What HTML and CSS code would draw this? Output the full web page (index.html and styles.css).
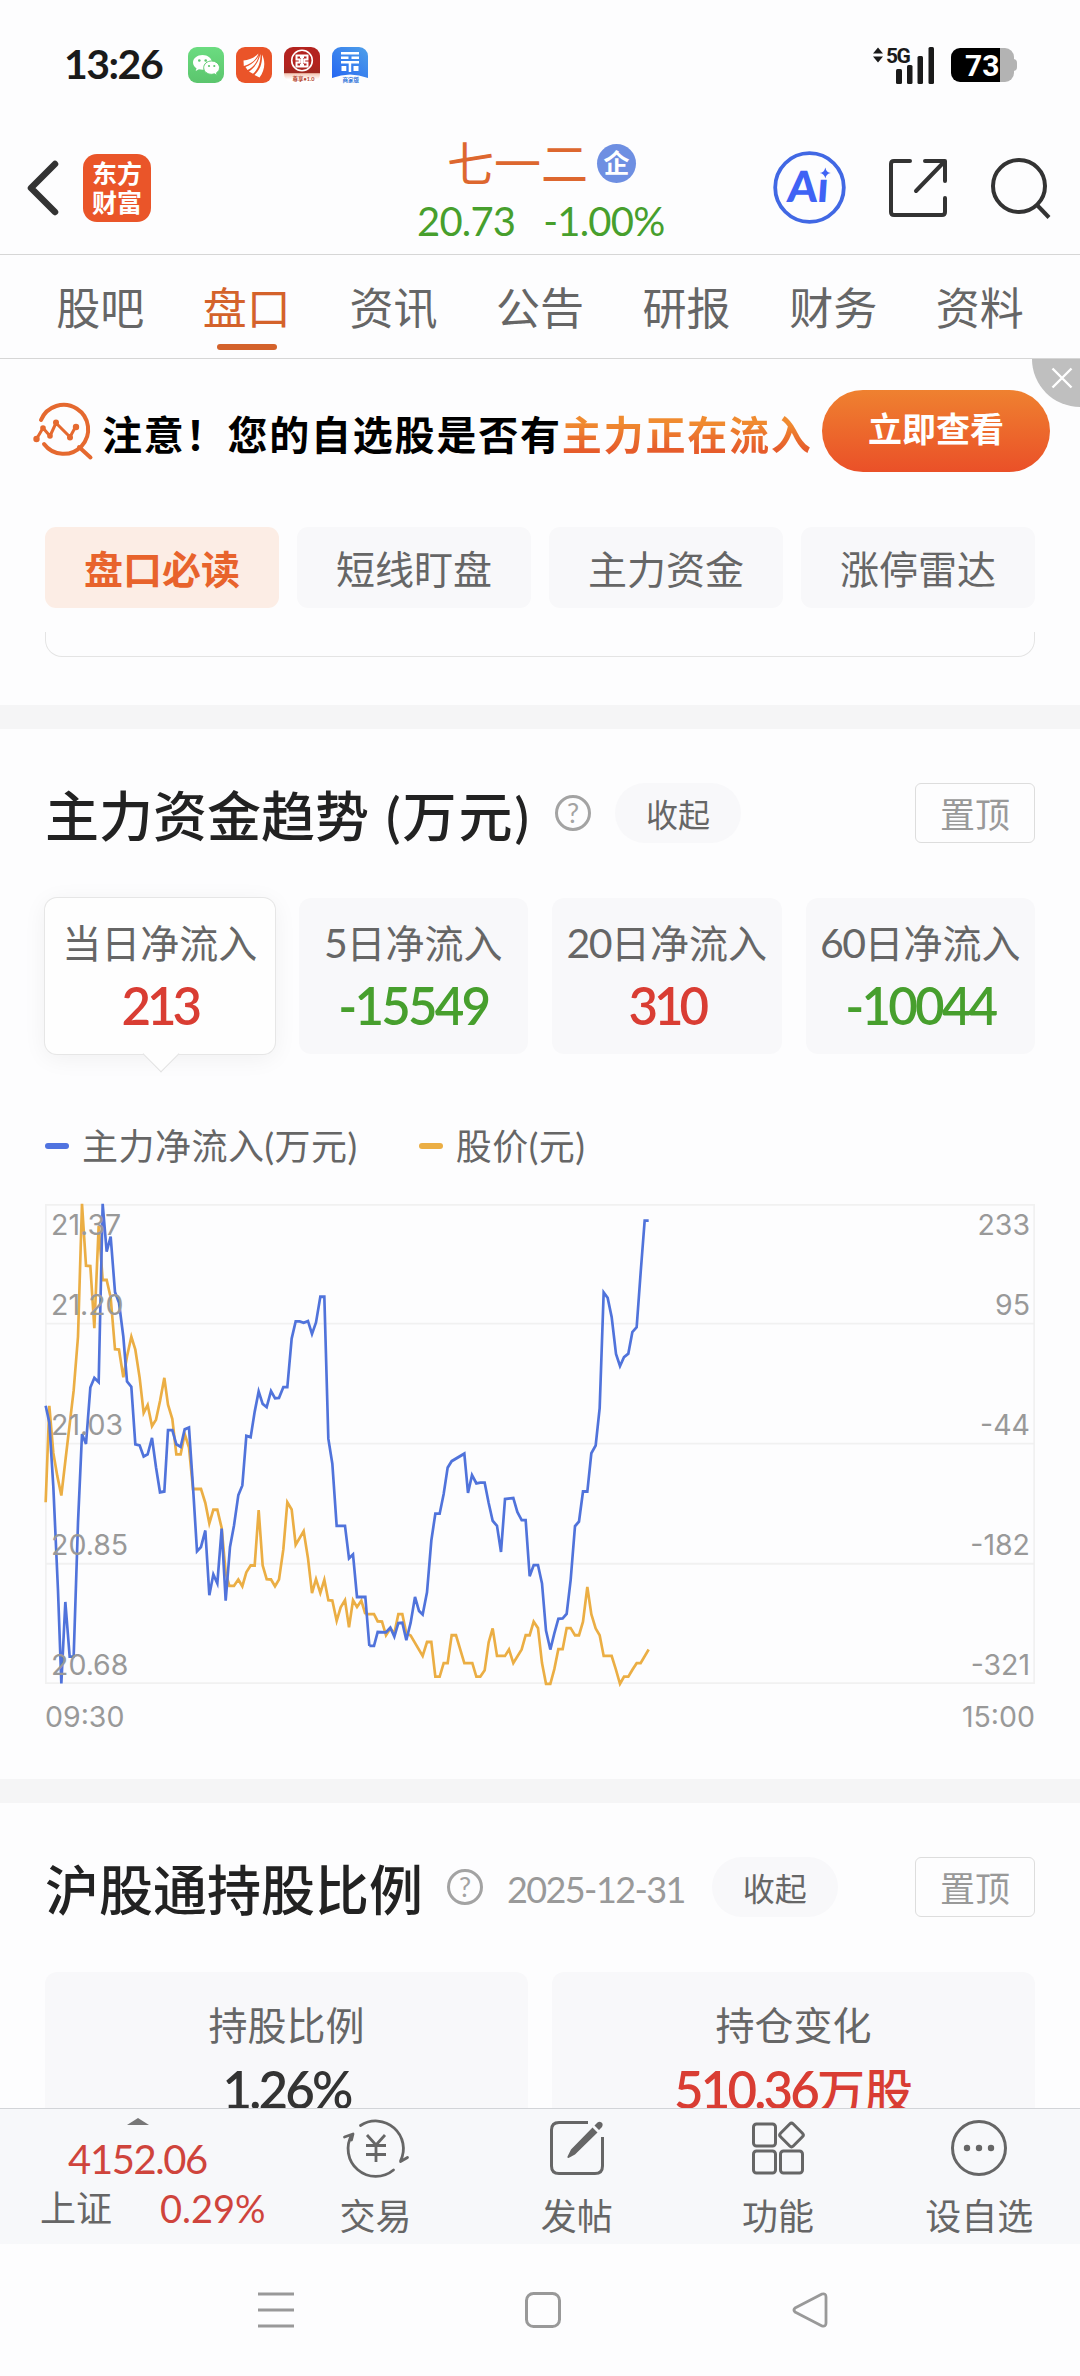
FILE: index.html
```html
<!DOCTYPE html>
<html lang="zh-CN">
<head>
<meta charset="utf-8">
<title>七一二 - 盘口</title>
<link rel="stylesheet" href="styles.css">
</head>
<body>
<div class="screen">
  <div class="status">
    <span class="clock">13:26</span>
    <div class="apps">
      <svg class="app" viewBox="0 0 36 36"><defs><linearGradient id="wx" x2="0" y2="1"><stop stop-color="#6bdc80"/><stop offset="1" stop-color="#5bc56d"/></linearGradient></defs><rect width="36" height="36" rx="9" fill="url(#wx)"/><path fill="#fff" d="M14.500 8c-5.200 0-9.500 3.300-9.500 7.500 0 2.400 1.400 4.500 3.500 5.800l-.8 2.700 3.200-1.700c1.200.3 2.400.4 3.600.4 5.200 0 9.500-3.200 9.500-7.200S19.700 8 14.500 8z"/><path fill="#fff" stroke="#61ce74" stroke-width="1" d="M23.500 14c-4.400 0-7.800 3-7.800 6.700s3.400 6.600 7.800 6.600c1 0 2-.2 2.900-.5l2.700 1.500-.6-2.500c1.900-1.200 3-3 3-5.100 0-3.700-3.600-6.700-8-6.700z"/><g fill="#5cc76e"><circle cx="11.300" cy="13.500" r="1.300"/><circle cx="17.700" cy="13.500" r="1.300"/><circle cx="21" cy="19" r="1.100"/><circle cx="26.300" cy="19" r="1.100"/></g></svg>
      <svg class="app" viewBox="0 0 36 36"><rect width="36" height="36" rx="9" fill="#ea5429"/><path fill="#fff" d="M7.500 13.500 7.800 19C15 17.500 20.500 12.500 22.500 6.500 18 11 13 13 7.500 13.500zM13 24.500l4 2.300c5.500-5 7.700-12.300 7.500-19.800-2 7.500-5.500 13.500-11.500 17.500zM18.500 28l5 2.500c5-6.500 6.500-15 2.500-23 .5 8-1.500 15-7.500 20.500zM9.500 20c6-2 11-6.500 13.500-12-1.500 7-6 12.500-11.500 15z"/></svg>
      <svg class="app" viewBox="0 0 36 36"><defs><linearGradient id="icbc" x2="0" y2="1"><stop offset=".5" stop-color="#b3231f"/><stop offset=".72" stop-color="#9e2a21"/><stop offset=".74" stop-color="#f5c8b5"/><stop offset=".9" stop-color="#fff"/></linearGradient></defs><rect width="36" height="36" rx="9" fill="url(#icbc)"/><circle cx="18" cy="13.500" r="10.300" fill="none" stroke="#fff" stroke-width="1.600"/><path fill="none" stroke="#fff" stroke-width="2" d="M12.500 8.500h11v4h-3.300v3h3.300v4h-11v-4h3.300v-3h-3.300zM16 10h4M16 18h4M18 10v8"/><text x="8.500" y="34" class="app-tag" fill="#b5442c">尊享•1.0</text></svg>
      <svg class="app" viewBox="0 0 36 36"><defs><linearGradient id="cz" x1="0" y1="1" x2="1" y2="0"><stop stop-color="#2566f2"/><stop offset="1" stop-color="#4fa0e9"/></linearGradient></defs><path d="M9 0h18a9 9 0 0 1 9 9v22q-18-7-36 0V9a9 9 0 0 1 9-9z" fill="url(#cz)"/><path fill="#fff" d="M9 5h18v2.500H9zM9 9.500h7.500V12H9zM19.500 9.500H27V12h-7.500zM9 14h18v2.500h-7.800V25h-2.500v-8.500H9zM9.500 19h4.800v5H9.500zM21.500 19h5v5h-5z"/><text x="10.500" y="34.500" class="app-tag" fill="#3576d9">商家版</text></svg>
    </div>
    <svg class="signal" viewBox="0 0 64 38" width="64" height="38"><path fill="#1a1a1a" d="M0 7.500 5 1.500l5 6zM0 10.500h10l-5 6z"/><text x="13" y="17" class="net">5G</text><g fill="#1a1a1a"><rect x="23" y="23" width="6" height="15" rx="1.500"/><rect x="34" y="19" width="5.500" height="19" rx="1.500"/><rect x="44.500" y="10" width="5.500" height="28" rx="1.500"/><rect x="55.500" y="1" width="5.500" height="37" rx="1.500"/></g></svg>
    <div class="battery"><span class="level">73</span></div>
  </div>

  <header class="header">
    <svg class="back" width="32" height="56" viewBox="0 0 32 56"><path d="M28 4 4 28l24 24" fill="none" stroke="#333" stroke-width="6.500" stroke-linecap="round" stroke-linejoin="round"/></svg>
    <div class="logo"><span>东方</span><span>财富</span></div>
    <div class="stock">
      <div class="name">七一二<span class="ent">企</span></div>
      <div class="quote"><span>20.73</span><span>-1.00%</span></div>
    </div>
    <div class="tools">
      <svg width="73" height="73" viewBox="0 0 73 73"><circle cx="36.500" cy="36.500" r="34.300" fill="none" stroke="#4168e4" stroke-width="3.800"/><path d="M52.300 16.500q1 5 5.500 5.500-4.500.7-5.500 5.500-1-4.800-5.500-5.500 4.500-.5 5.500-5.500z" fill="#3f63f5"/><text x="17" y="51" class="ai" transform="skewX(-4)">Aı</text></svg>
      <svg width="60" height="60" viewBox="0 0 60 60" fill="none" stroke="#333" stroke-width="4" stroke-linecap="round" stroke-linejoin="round"><path d="M22 3H6Q3 3 3 6v48q0 3 3 3h48q3 0 3-3V40M37 3h20v20M56 4 28 33"/></svg>
      <svg width="60" height="60" viewBox="0 0 60 60" fill="none" stroke="#333" stroke-width="4"><circle cx="28" cy="28" r="26"/><path d="m46 47 12 12.500"/></svg>
    </div>
  </header>

  <nav class="tabs">
    <span>股吧</span><span class="on">盘口</span><span>资讯</span><span>公告</span><span>研报</span><span>财务</span><span>资料</span>
  </nav>

  <main class="content">
    <div class="banner">
      <svg width="60" height="58" viewBox="0 0 60 58" fill="none" stroke="#e5692f" stroke-width="4" stroke-linecap="round" stroke-linejoin="round"><path d="M8 18A24.500 24.500 0 1 1 11 42M46 45l11.500 10.500"/><path stroke-width="3" d="m3.500 37 6.500-11 7 8 6-13L37 35l6-11"/><g fill="#e5692f" stroke="none"><circle cx="3.500" cy="37" r="3.200"/><circle cx="10" cy="26" r="2.800"/><circle cx="17" cy="34" r="2.800"/><circle cx="23" cy="20.500" r="3"/><circle cx="37" cy="35.500" r="3"/><circle cx="43" cy="25" r="3.200"/></g></svg>
      <p class="pitch">注意！您的自选股是否有<em>主力正在流入</em></p>
      <span class="cta">立即查看</span>
      <span class="close"><svg width="22" height="22" viewBox="0 0 22 22"><path d="m1.500 1.500 19 19m0-19-19 19" stroke="#fff" stroke-width="2.400"/></svg></span>
    </div>

    <div class="chips">
      <span class="on">盘口必读</span><span>短线盯盘</span><span>主力资金</span><span>涨停雷达</span>
    </div>
    <div class="card-tail"></div>

    <section class="trend">
      <div class="head">
        <h2>主力资金趋势<span class="unit">(万元)</span></h2>
        <span class="help">?</span>
        <span class="fold">收起</span>
        <span class="pin">置顶</span>
      </div>
      <div class="periods">
        <div class="period on"><span class="label">当日净流入</span><b class="up">213</b></div>
        <div class="period"><span class="label"><i>5</i>日净流入</span><b class="down">-15549</b></div>
        <div class="period"><span class="label"><i>20</i>日净流入</span><b class="up">310</b></div>
        <div class="period"><span class="label"><i>60</i>日净流入</span><b class="down">-10044</b></div>
      </div>
      <div class="legend"><span class="flow">主力净流入(万元)</span><span class="price">股价(元)</span></div>
      <div class="chart">
        <svg class="plot" viewBox="45 68.500 2970 1343" preserveAspectRatio="none">
          <g stroke="#f1f1f1" stroke-width="5" fill="none"><path d="M45 403H3015M45 739H3015M45 1075H3015"/><rect x="47.500" y="71" width="2965" height="1338"/></g>
          <g fill="none" stroke-width="8" stroke-linejoin="miter">
            <g stroke="#ebae44">
              <polyline points="47,903 58,633 70,765 82,830 94,884 107,780 119,685 131,590 144,440 156,68 168,241 181,242 193,416 206,130 218,281 230,281 242,330 255,475 267,476 280,553 291,495 304,440 316,476 329,555 341,653 353,631 366,690 378,672 390,620 403,555 414,630 427,670 439,769 452,769 464,712 477,750 489,866 513,866 526,905 538,962 550,924 562,924 575,975 587,1100 598,1137 612,1137 625,1119 637,1138 649,1099 662,1080 674,1080 686,925 698,1080 710,1118 723,1119 735,1138 747,1119 760,1035 772,903 785,923 797,1022 809,1003 821,984 834,1060 846,1157 858,1118 871,1157 883,1120 895,1177 907,1178 920,1235 932,1197 945,1177 957,1253 969,1177 981,1196 994,1178 1006,1216"/>
              <polyline transform="translate(960)" points="46,1216 72,1216 83,1236 96,1237 108,1275 121,1256 133,1270 145,1216 157,1216 169,1270 182,1276 218,1333 231,1294 244,1294 256,1391 269,1391 281,1353 293,1353 305,1275 318,1275 343,1353 367,1353 379,1391 391,1391 404,1373 416,1295 428,1256 441,1333 465,1333 477,1315 490,1353 515,1315 527,1275 539,1275 551,1237 564,1255 576,1353 588,1411 601,1411 613,1370 625,1314 638,1314 650,1255 662,1255 675,1275 687,1275 699,1237 712,1140 724,1216 737,1256 749,1275 761,1333 785,1333 798,1372 810,1411 822,1391 835,1391 847,1372 860,1353 872,1353 896,1315"/>
            </g>
            <g stroke="#5073db">
              <polyline points="47,633 58,680 70,860 84,1150 94,1410 106,1182 119,1335 131,1335 144,960 156,712 168,740 181,582 193,555 206,567 218,68 230,202 242,160 255,315 267,345 280,440 291,565 304,580 316,741 329,744 341,775 353,769 366,723 378,805 390,875 403,873 414,701 427,701 439,741 452,748 464,699 477,694 489,860 501,1040 513,1028 526,982 538,1163 550,1105 562,1130 575,977 587,1178 600,1028 612,968 625,883 637,856 649,717 662,721 674,650 686,593 698,628 710,637 723,592 735,612 747,611 760,581 772,581 785,445 797,397 809,397 821,401 834,396 846,432 858,400 871,328 883,328 895,725 907,795 920,969 945,969 957,1060 969,1049 981,1168 1006,1168 1018,1305"/>
              <polyline transform="translate(960)" points="58,1305 72,1305 83,1266 108,1267 121,1254 133,1279 145,1241 157,1240 169,1289 182,1240 195,1168 207,1207 218,1217 231,1155 244,1010 256,935 269,935 281,880 293,806 305,788 343,767 354,877 366,827 379,850 391,848 404,848 416,905 428,955 441,969 453,1042 465,894 490,891 502,930 515,953 527,953 539,1110 551,1079 564,1079 576,1130 588,1262 601,1315 613,1270 625,1229 638,1228 650,1215 662,1120 675,970 687,957 699,873 712,873 724,766 737,744 749,640 761,316 773,331 785,385 798,488 810,522 822,497 835,487 847,427 860,413 872,260 884,115 896,115"/>
            </g>
          </g>
        </svg>
        <div class="scale"><span>21.37</span><span>21.20</span><span>21.03</span><span>20.85</span><span>20.68</span></div>
        <div class="scale right"><span>233</span><span>95</span><span>-44</span><span>-182</span><span>-321</span></div>
      </div>
      <div class="times"><span>09:30</span><span>15:00</span></div>
    </section>

    <section class="holding">
      <div class="head">
        <h2>沪股通持股比例</h2>
        <span class="help">?</span>
        <span class="date">2025-12-31</span>
        <span class="fold">收起</span>
        <span class="pin">置顶</span>
      </div>
      <div class="stats">
        <div class="stat"><span class="label">持股比例</span><b>1.26%</b></div>
        <div class="stat"><span class="label">持仓变化</span><b class="change">510.36<i>万股</i></b></div>
      </div>
    </section>
  </main>

  <footer class="bar">
    <div class="index">
      <i class="caret"></i>
      <span class="points">4152.06</span>
      <div class="row"><span>上证</span><span class="pct">0.29%</span></div>
    </div>
    <div class="action"><svg width="66" height="58" viewBox="0 0 66 58" fill="none" stroke="#666" stroke-width="2.800" stroke-linecap="round" stroke-linejoin="round"><path d="M17.500 6.500A27.700 27.700 0 0 1 57.500 42M50.500 51A27.700 27.700 0 0 1 9 15.500M1.500 18l8.500-3-1.500 6M57.500 42.500l7-4"/><path d="m24 16 9 10 9-10M23 26.500h20M23 35.500h20M33 26v17" stroke-linecap="butt"/></svg><span>交易</span></div>
    <div class="action"><svg width="58" height="58" viewBox="0 0 58 58" fill="none" stroke="#666" stroke-width="3"><path d="M40 3.500H11Q3.500 3.500 3.500 11v36q0 7.500 7.500 7.500h36q7.500 0 7.500-7.500V18"/><path fill="#666" stroke="none" d="m44.500 8.500 5 5L27 35.500l-6.500 3.500q-1.500 0-1-1.500l3.500-7zM46.500 6.500l3-3q2-1.500 4 0t.5 4.500l-3 3z"/></svg><span>发帖</span></div>
    <div class="action"><svg width="54" height="54" viewBox="0 0 54 54" fill="none" stroke="#666" stroke-width="3"><rect x="2.500" y="3" width="22" height="22" rx="3"/><rect x="2.500" y="30" width="22" height="22" rx="3"/><rect x="29.500" y="30" width="22" height="22" rx="3"/><rect x="31.500" y="5" width="18" height="18" rx="2.500" transform="rotate(45 40.500 14)"/></svg><span>功能</span></div>
    <div class="action"><svg width="58" height="58" viewBox="0 0 58 58"><circle cx="29" cy="29" r="26.500" fill="none" stroke="#666" stroke-width="3"/><g fill="#666"><circle cx="17" cy="29" r="3.200"/><circle cx="29" cy="29" r="3.200"/><circle cx="41" cy="29" r="3.200"/></g></svg><span>设自选</span></div>
  </footer>

  <div class="sysnav">
    <svg width="36" height="36" viewBox="0 0 36 36" stroke="#999" stroke-width="3"><path d="M0 2h36M0 18h36M0 34h36"/></svg>
    <svg width="36" height="36" viewBox="0 0 36 36" fill="none" stroke="#999" stroke-width="3"><rect x="1.500" y="1.500" width="33" height="33" rx="7"/></svg>
    <svg width="36" height="36" viewBox="0 0 36 36" fill="none" stroke="#999" stroke-width="2.800" stroke-linejoin="round"><path d="M3 16 30 2q4-1 4 3v26q0 4-4 3L3 20q-2-2 0-4z"/></svg>
  </div>
</div>
</body>
</html>
```
FILE: styles.css
```css
* { box-sizing: border-box; }
body {
  margin: 0;
  background: #fdfdfe;
  font-family: Lato, "Noto Sans CJK SC", sans-serif;
  color: #666;
}
i, em { font-style: normal; }
svg { display: block; flex: none; overflow: visible; }
.up { color: #d93d33; }
.down { color: #479f2d; }

.screen {
  width: 1080px;
  height: 2376px;
  display: flex;
  flex-direction: column;
  overflow: hidden;
}

/* status bar */
.status {
  flex: none;
  height: 130px;
  display: flex;
  align-items: center;
  padding: 0 66px 0 64px;
}
.clock {
  width: 124px;
  margin-top: -3px;
  color: #1a1a1a;
  font-size: 41px;
  font-weight: 700;
  letter-spacing: -1.500px;
}
.apps { display: flex; gap: 12px; flex: 1; }
.app { width: 36px; height: 36px; }
.app-tag { font-size: 5.500px; font-weight: 700; }
.net { font: 700 21px/1 Roboto, sans-serif; letter-spacing: -1.500px; fill: #1a1a1a; }
.signal { margin-right: 14px; margin-top: -1px; }
.battery {
  position: relative;
  width: 63px;
  height: 34px;
  border-radius: 9px;
  background: linear-gradient(90deg, #000 49px, #b3b3b3 49px);
}
.battery::after {
  content: "";
  position: absolute;
  left: 62px;
  top: 11px;
  width: 4px;
  height: 12px;
  border-radius: 0 4px 4px 0;
  background: #b3b3b3;
}
.level {
  display: block;
  padding-left: 14px;
  color: #fff;
  font: 700 30px/36px Roboto, sans-serif;
}

/* stock header */
.header {
  flex: none;
  height: 125px;
  display: flex;
  align-items: center;
  padding: 0 29px 9px 27px;
  border-bottom: 1px solid #d6d6d6;
}
.logo {
  width: 68px;
  height: 68px;
  margin-left: 24px;
  border-radius: 14px;
  background: #ea5529;
  color: #fff;
  font-size: 25px;
  font-weight: 700;
  line-height: 29px;
  display: flex;
  flex-direction: column;
  align-items: center;
  justify-content: center;
}
.stock { margin-left: 266px; width: 260px; padding-top: 9px; }
.name {
  height: 58px;
  display: flex;
  align-items: center;
  padding-left: 30px;
  color: #dd672f;
  font-size: 47px;
  line-height: 58px;
}
.ent {
  width: 39px;
  height: 39px;
  margin-left: 9px;
  border-radius: 50%;
  background: #6e8fe2;
  color: #fff;
  font-size: 26px;
  font-weight: 700;
  line-height: 38px;
  text-align: center;
}
.quote {
  height: 58px;
  display: flex;
  gap: 28px;
  color: #479f2d;
  font-size: 40px;
  line-height: 58px;
  letter-spacing: -0.8px;
}
.tools { margin-left: auto; display: flex; align-items: center; }
.tools svg + svg { margin-left: 42px; }
.tools svg:last-child { margin-left: 43px; }
.ai { font: 900 43px/1 Lato, sans-serif; fill: #3f63f5; }

/* section tabs */
.tabs {
  flex: none;
  height: 104px;
  display: flex;
  padding: 23px 27px 0;
  border-bottom: 1px solid #d6d6d6;
}
.tabs span {
  flex: 1;
  display: flex;
  flex-direction: column;
  align-items: center;
  font-size: 44px;
  line-height: 60px;
}
.tabs .on { color: #d4622b; }
.tabs .on::after {
  content: "";
  width: 60px;
  height: 6px;
  margin-top: 6px;
  border-radius: 3px;
  background: #d4622b;
}

.content { flex: 1; min-height: 0; overflow: hidden; }

/* promo banner */
.banner {
  position: relative;
  height: 144px;
  display: flex;
  align-items: center;
  padding: 0 30px 0 33px;
}
.pitch {
  margin: 4px 0 0 9px;
  color: #000;
  font-size: 40px;
  font-weight: 700;
  letter-spacing: 1.800px;
  white-space: nowrap;
}
.pitch em {
  background: linear-gradient(#f08b30 25%, #e65c2b 80%);
  -webkit-background-clip: text;
  background-clip: text;
  color: transparent;
}
.cta {
  width: 228px;
  height: 82px;
  margin-left: auto;
  border-radius: 41px;
  background: linear-gradient(#ef8130, #ea5028);
  color: #fff;
  font-size: 34px;
  font-weight: 700;
  line-height: 78px;
  text-align: center;
}
.close {
  position: absolute;
  right: 0;
  top: 0;
  width: 48px;
  height: 48px;
  padding: 8px 0 0 19px;
  border-bottom-left-radius: 48px;
  background: #bfbfbf;
}

/* anchor chips */
.chips {
  display: grid;
  grid-template-columns: repeat(4, 1fr);
  gap: 18px;
  margin: 24px 45px 0;
}
.chips span {
  height: 81px;
  border-radius: 11px;
  background: #f8f8fa;
  font-size: 39px;
  line-height: 84px;
  text-align: center;
}
.chips .on { background: #fcede5; color: #e8632c; font-weight: 700; }
.card-tail {
  height: 25px;
  margin: 24px 45px 0;
  border: 1px solid #e4e4e4;
  border-top: 0;
  border-radius: 0 0 17px 17px;
}

/* content sections */
.trend { margin-top: 48px; }
.trend, .holding { border-top: 24px solid #f5f5f6; padding: 54px 45px 0; }
.head { height: 60px; display: flex; align-items: center; }
h2 {
  margin: 8px 0 0;
  color: #222;
  font-size: 54px;
  font-weight: 500;
  line-height: 60px;
  white-space: nowrap;
}
.unit { margin-left: 17px; letter-spacing: 2px; }
.help {
  width: 36px;
  height: 36px;
  margin-left: 24px;
  border: 3px solid #a3a3a3;
  border-radius: 50%;
  color: #a3a3a3;
  font-size: 27px;
  line-height: 29px;
  text-align: center;
}
.fold {
  width: 126px;
  height: 60px;
  margin-left: 24px;
  border-radius: 30px;
  background: #f8f8fa;
  font-size: 32px;
  line-height: 63px;
  text-align: center;
}
.pin {
  width: 120px;
  height: 60px;
  margin-left: auto;
  border: 1px solid #ddd;
  border-radius: 6px;
  color: #999;
  font-size: 35px;
  line-height: 61px;
  text-align: center;
}
.date { margin: 4px 0 0 24px; color: #999; font-size: 36px; letter-spacing: -1.600px; }
.date + .fold { margin-left: 27px; }

.periods {
  display: grid;
  grid-template-columns: repeat(4, 1fr);
  gap: 24px;
  margin-top: 55px;
}
.period {
  position: relative;
  height: 156px;
  padding-top: 15px;
  border-radius: 12px;
  background: #f8f8fa;
  display: flex;
  flex-direction: column;
  align-items: center;
}
.period.on {
  background: #fefefe;
  box-shadow: 0 0 0 1px #e6e6e6, 0 4px 24px rgba(0, 0, 0, 0.06);
}
.period.on::after {
  content: "";
  position: absolute;
  left: 50%;
  bottom: -13px;
  width: 25px;
  height: 25px;
  margin-left: -12px;
  border: solid #e2e2e2;
  border-width: 0 1px 1px 0;
  background: #fefefe;
  transform: rotate(45deg);
}
.label { font-size: 39px; line-height: 60px; white-space: nowrap; }
.label i { font-size: 41px; letter-spacing: -1.500px; }
.period b, .stat b { font-size: 51px; font-weight: 600; line-height: 66px; letter-spacing: -2.800px; }
.period .up { letter-spacing: -4px; }

.legend { display: flex; height: 60px; margin-top: 62px; font-size: 36px; line-height: 60px; letter-spacing: 0.5px; }
.legend span { display: flex; align-items: center; margin-right: 61px; }
.legend span::before {
  content: "";
  width: 24px;
  height: 6px;
  margin-right: 13px;
  border-radius: 3px;
}
.flow::before { background: #5073e0; }
.price::before { background: #ebae44; }

.chart { position: relative; height: 480px; margin-top: 28px; }
.plot { width: 990px; height: 480px; }
.scale {
  position: absolute;
  left: 6px;
  top: 1px;
  display: grid;
  gap: 80px;
  color: #999;
  font: 28.500px/40px Inter, sans-serif;
}
.scale span:first-child { margin-bottom: -40px; }
.scale.right { left: auto; right: 5px; text-align: right; }
.times {
  display: flex;
  justify-content: space-between;
  margin-top: 13px;
  color: #999;
  font: 28.500px/40px Inter, sans-serif;
}

.holding { margin-top: 42px; }
.stats { display: grid; grid-template-columns: 1fr 1fr; gap: 24px; margin-top: 55px; }
.stat {
  height: 156px;
  padding-top: 23px;
  border-radius: 12px;
  background: #f8f8fa;
  display: flex;
  flex-direction: column;
  align-items: center;
}
.stat b { margin-top: 2px; color: #333; }
.stat .change { color: #d93d33; }
.stat b i { font-size: 48px; font-weight: 500; letter-spacing: 0; }

/* bottom bar */
.bar {
  flex: none;
  height: 136px;
  display: flex;
  border-top: 1px solid #d2d4d8;
  background: #f7f8fa;
}
.index { width: 275px; display: flex; flex-direction: column; align-items: center; padding-top: 9px; }
.caret { border: solid transparent; border-width: 0 11px 7px; border-bottom-color: #777; }
.points { color: #cf443c; font-size: 40px; line-height: 60px; letter-spacing: -1.400px; margin-top: 4px; }
.row { display: flex; gap: 48px; width: 233px; margin-left: 38px; font-size: 36px; line-height: 40px; margin-top: -1px; }
.pct { color: #cf443c; font-size: 38px; letter-spacing: 0; }
.action { flex: 1; display: flex; flex-direction: column; align-items: center; }
.action svg { height: 58px; margin-top: 10px; }
.action span { font-size: 36px; line-height: 50px; margin-top: 14px; white-space: nowrap; }

/* system navigation */
.sysnav { flex: none; height: 132px; display: flex; align-items: center; padding: 0 252px 0 258px; justify-content: space-between; }
```
